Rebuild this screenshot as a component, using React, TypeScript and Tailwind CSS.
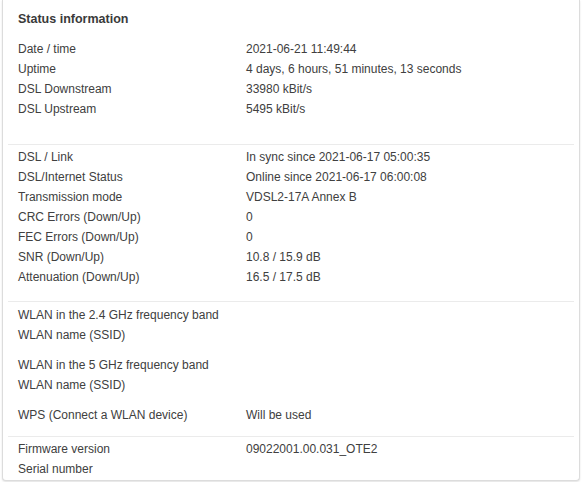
import React from "react";

type Row = [string, string];

const sec1: Row[] = [
  ["Date / time", "2021-06-21 11:49:44"],
  ["Uptime", "4 days, 6 hours, 51 minutes, 13 seconds"],
  ["DSL Downstream", "33980 kBit/s"],
  ["DSL Upstream", "5495 kBit/s"],
];

const sec2: Row[] = [
  ["DSL / Link", "In sync since 2021-06-17 05:00:35"],
  ["DSL/Internet Status", "Online since 2021-06-17 06:00:08"],
  ["Transmission mode", "VDSL2-17A Annex B"],
  ["CRC Errors (Down/Up)", "0"],
  ["FEC Errors (Down/Up)", "0"],
  ["SNR (Down/Up)", "10.8 / 15.9 dB"],
  ["Attenuation (Down/Up)", "16.5 / 17.5 dB"],
];

function Rows({ rows }: { rows: Row[] }) {
  return (
    <>
      {rows.map(([l, v]) => (
        <div key={l} className="flex h-[20px] items-center leading-[20px]">
          <div className="w-[228px] shrink-0">{l}</div>
          <div>{v}</div>
        </div>
      ))}
    </>
  );
}

function Sep() {
  return <div className="mx-[5px] h-px bg-[#ebebeb]" />;
}

export default function App() {
  return (
    <div className="h-[482px] w-[584px] bg-white pl-[2px]" style={{ fontFamily: '"Liberation Sans", Arial, sans-serif' }}>
      <div className="w-[578px] rounded-b-[4px] border-x border-b border-[#dcdcdc] bg-white pb-[1px] text-[12px] text-[#404040] shadow-[0_1px_2px_rgba(0,0,0,0.12)]">
        <div className="px-[15px] pt-[9px]">
          <div className="h-[20px] text-[12.5px] font-bold leading-[20px] text-[#3a3a3a]">Status information</div>
          <div className="h-[10px]" />
          <Rows rows={sec1} />
          <div className="h-[25px]" />
        </div>
        <Sep />
        <div className="px-[15px] pt-[2px] pb-[14px]">
          <Rows rows={sec2} />
        </div>
        <Sep />
        <div className="px-[15px] pt-[3px] pb-[11px]">
          <Rows rows={[["WLAN in the 2.4 GHz frequency band", ""], ["WLAN name (SSID)", ""]]} />
          <div className="h-[10px]" />
          <Rows rows={[["WLAN in the 5 GHz frequency band", ""], ["WLAN name (SSID)", ""]]} />
          <div className="h-[10px]" />
          <Rows rows={[["WPS (Connect a WLAN device)", "Will be used"]]} />
        </div>
        <Sep />
        <div className="px-[15px] pt-[2px]">
          <Rows rows={[["Firmware version", "09022001.00.031_OTE2"], ["Serial number", ""]]} />
        </div>
      </div>
    </div>
  );
}
